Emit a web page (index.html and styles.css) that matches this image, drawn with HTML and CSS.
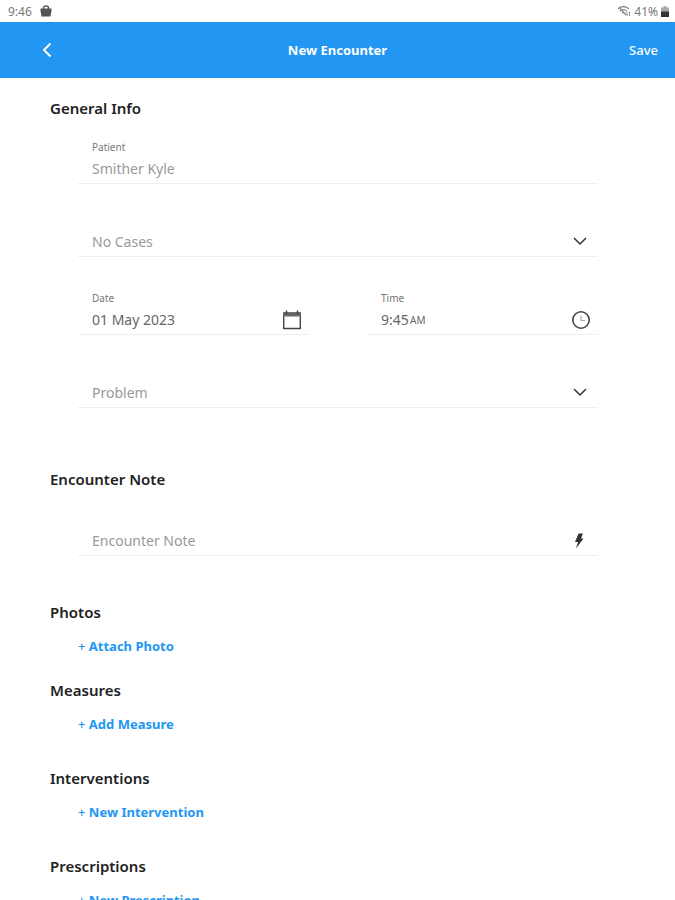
FILE: index.html
```
<!DOCTYPE html>
<html lang="en">
<head>
    <meta charset="UTF-8">
    <meta name="viewport" content="width=device-width, initial-scale=1.0">
    <title>New Encounter</title>
    <link rel="stylesheet" href="styles.css">
</head>
<body>
    <div class="status-bar">
        <span>9:46</span>
        <svg width="12" height="12" viewBox="0 0 12 12">
            <path d="M3.5 4V2.8Q3.5 1 6 1t2.5 1.8V4" fill="none" stroke="#555" stroke-width="1.4"/>
            <path d="M0.5 3.5h11v2.5l-1 5.5h-9l-1-5.5z" fill="#555"/>
        </svg>
        <div class="status-right">
            <svg width="14" height="12" viewBox="0 0 14 12" fill="none" stroke="#888" stroke-width="1.2">
                <path d="M1 4Q6.500-1 12 4M3 6.200Q6.500 3 10 6.200M5 8.200Q6.500 7 8 8.200M2 2l7 8"/>
                <path d="M10 7v4M12.500 7v4" stroke-width="1"/>
            </svg>
            <span>41%</span>
            <svg width="8" height="11" viewBox="0 0 8 11">
                <path d="M2.500 0h3v1.500H8V6H0V1.500h2.500z" fill="#aaa"/>
                <path d="M0 5.500h8V11H0z" fill="#333"/>
            </svg>
        </div>
    </div>
    <header class="app-bar">
        <button class="back-button" aria-label="Back">
            <svg width="10" height="16" viewBox="0 0 10 16" fill="none" stroke="#fff" stroke-width="2">
                <path d="M8.500 1.500L2 8l6.500 6.500"/>
            </svg>
        </button>
        <h1>New Encounter</h1>
        <button class="save-button">Save</button>
    </header>
    <main>
        <section class="general">
            <h2>General Info</h2>
            <div class="fields">
                <div class="field">
                    <label for="patient">Patient</label>
                    <div class="control">
                        <input class="muted" id="patient" type="text" value="Smither Kyle">
                    </div>
                </div>
                <div class="field">
                    <div class="control">
                        <select class="muted" id="case" aria-label="Case">
                            <option>No Cases</option>
                        </select>
                        <svg class="chevron" width="16" height="10" viewBox="0 0 16 10"><path d="M2 1l6 6 6-6"/></svg>
                    </div>
                </div>
                <div class="field-row">
                    <div class="field">
                        <label for="date">Date</label>
                        <div class="control">
                            <input id="date" type="text" value="01 May 2023">
                            <svg class="icon" width="20" height="20" viewBox="0 0 20 20">
                                <path d="M1.700 3h16.600v15.500H1.700z" fill="none" stroke="#444" stroke-width="1.400"/>
                                <path d="M1 3h18v3.500H1z" fill="#666"/>
                                <path d="M4.500 0.500V4M15.500 0.500V4" stroke="#444" stroke-width="1.500"/>
                            </svg>
                        </div>
                    </div>
                    <div class="field">
                        <label for="time">Time</label>
                        <div class="control">
                            <input class="time" id="time" type="text" value="9:45">
                            <span class="meridiem">AM</span>
                            <svg class="icon" width="20" height="20" viewBox="0 0 20 20" fill="none">
                                <circle cx="10" cy="10" r="8.200" stroke="#444" stroke-width="1.600"/>
                                <path d="M10 5.500V10.500h4" stroke="#aaa" stroke-width="1.200"/>
                            </svg>
                        </div>
                    </div>
                </div>
                <div class="field">
                    <div class="control">
                        <select class="muted" id="problem" aria-label="Problem">
                            <option>Problem</option>
                        </select>
                        <svg class="chevron" width="16" height="10" viewBox="0 0 16 10"><path d="M2 1l6 6 6-6"/></svg>
                    </div>
                </div>
            </div>
        </section>
        <section class="note">
            <h2>Encounter Note</h2>
            <div class="fields">
                <div class="field">
                    <div class="control">
                        <input type="text" placeholder="Encounter Note" aria-label="Encounter Note">
                        <svg class="bolt" width="10" height="16" viewBox="0 0 10 16">
                            <path d="M4.500 0.500h4.500L7 5.500H9.500L2 15.500 4 9H1z" fill="#333"/>
                        </svg>
                    </div>
                </div>
            </div>
        </section>
        <section class="photos">
            <h2>Photos</h2>
            <button class="add-button"><span>+</span> Attach Photo</button>
        </section>
        <section class="list">
            <h2>Measures</h2>
            <button class="add-button"><span>+</span> Add Measure</button>
        </section>
        <section class="list">
            <h2>Interventions</h2>
            <button class="add-button"><span>+</span> New Intervention</button>
        </section>
        <section class="list">
            <h2>Prescriptions</h2>
            <button class="add-button"><span>+</span> New Prescription</button>
        </section>
    </main>
</body>
</html>
```
FILE: styles.css
```
* {
    box-sizing: border-box;
}
body {
    margin: 0;
    background: #fff;
    color: #222;
    font-family: "Noto Sans", sans-serif;
    font-size: 13px;
}
button, input, select {
    font: inherit;
    color: inherit;
    background: none;
    border: none;
    padding: 0;
    margin: 0;
}
button {
    cursor: pointer;
}
svg {
    display: block;
    flex: none;
}
.status-bar {
    display: flex;
    align-items: center;
    gap: 8px;
    height: 22px;
    padding: 0 6px 0 8px;
    font-size: 12px;
    color: #777;
}
.status-right {
    display: flex;
    align-items: center;
    gap: 3px;
    margin-left: auto;
}
.app-bar {
    display: grid;
    grid-template-columns: 1fr auto 1fr;
    align-items: center;
    height: 56px;
    padding: 0 17px 0 42px;
    background: #2196f3;
    color: #fff;
}
.app-bar h1 {
    margin: 0 0 0 -25px;
    font-size: 13px;
    font-weight: 700;
}
.back-button {
    justify-self: start;
}
.save-button {
    justify-self: end;
    font-size: 13px;
    font-weight: 500;
}
main {
    padding: 18px 77px 0 50px;
}
h2 {
    margin: 0;
    font-size: 15px;
    font-weight: 600;
    line-height: 24px;
}
.fields {
    display: flex;
    flex-direction: column;
    gap: 28px;
    margin-left: 28px;
}
.general .fields {
    margin-top: 19px;
}
.field {
    display: flex;
    flex-direction: column;
    justify-content: flex-end;
    min-height: 45px;
    padding: 0 8px 0 14px;
    border-bottom: 1px solid #eee;
}
.field-row {
    display: grid;
    grid-template-columns: minmax(0, 1fr) minmax(0, 1fr);
    gap: 58px;
    margin-top: 5px;
}
.field-row .field {
    padding-right: 7px;
}
.field label {
    font-size: 10px;
    line-height: 16px;
    color: #777;
}
.control {
    display: flex;
    align-items: center;
    height: 28px;
    font-size: 14px;
    color: #666;
}
.control input, .control select {
    flex: 1;
    min-width: 0;
    height: 28px;
    padding-bottom: 2px;
    appearance: none;
    outline: none;
}
.control .muted, .control input::placeholder {
    color: #999;
    opacity: 1;
}
.control .time {
    flex: none;
    width: 29px;
}
.meridiem {
    font-size: 10px;
}
.icon {
    margin-left: auto;
}
.chevron {
    margin-right: 2px;
    fill: none;
    stroke: #333;
    stroke-width: 1.5;
}
.bolt {
    margin-right: 6px;
}
.note {
    margin-top: 59px;
}
.note .fields {
    margin-top: 20px;
}
.photos {
    margin-top: 44px;
}
.list {
    margin-top: 30px;
}
.photos + .list {
    margin-top: 20px;
}
.add-button {
    display: block;
    margin: 10px 0 0 28px;
    font-size: 13px;
    font-weight: 700;
    line-height: 24px;
    color: #2196f3;
}
.add-button span {
    font-weight: 500;
}
```
